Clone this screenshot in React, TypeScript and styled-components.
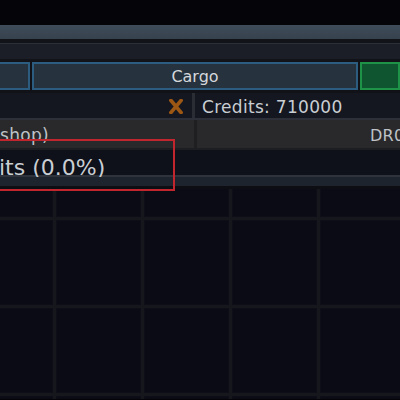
import React from 'react';
import styled, { createGlobalStyle } from 'styled-components';

const GlobalStyle = createGlobalStyle`
    html, body {
        margin: 0;
        padding: 0;
        background: #050509;
        overflow: hidden;
    }
    body {
        font-family: "DejaVu Sans", "Liberation Sans", sans-serif;
        color: #c9ced3;
    }
`;

const Viewport = styled.div`
    width: 400px;
    height: 400px;
    overflow: hidden;
    background: #050509;
`;

// the screen is cropped: the panel runs on past the left edge
const Panel = styled.div`
    width: 520px;
    margin-left: -120px;
    display: flex;
    flex-direction: column;
`;

const TopGap = styled.div`
    height: 25px;
    background: #050509;
`;

const TitleBar = styled.div`
    height: 14px;
    background: linear-gradient(#3f4c59, #36424e);
    border-bottom: 4px solid #111318;
`;

const SubBar = styled.div`
    height: 15px;
    background: #1b1e26;
    border-top: 1px solid #2b2f37;
    border-bottom: 3px solid #111318;
`;

const TabRow = styled.div`
    display: flex;
    gap: 2px;
    height: 28px;
    background: #101217;
    padding-bottom: 3px;
`;

const Tab = styled.div<{ $width: number; $active?: boolean }>`
    flex: 0 0 ${p => p.$width}px;
    box-sizing: border-box;
    display: flex;
    align-items: center;
    justify-content: center;
    font-size: 16px;
    color: #d4d8dc;
    background: ${p => (p.$active ? '#0f5530' : '#26323d')};
    border: 2px solid ${p => (p.$active ? '#1e9348' : '#2c5c80')};
`;

const InfoRow = styled.div<{ $bg: string; $line: string; $h: number }>`
    display: flex;
    height: ${p => p.$h}px;
    background: ${p => p.$bg};
    border-bottom: 2px solid ${p => p.$line};
`;

const Cell = styled.div<{ $width?: number; $sep: string; $pad: number; $color?: string; $size?: number }>`
    flex: ${p => (p.$width ? `0 0 ${p.$width}px` : '1')};
    box-sizing: border-box;
    display: flex;
    align-items: center;
    padding: 2px 0 0 ${p => p.$pad}px;
    font-size: ${p => p.$size || 17}px;
    letter-spacing: 0.3px;
    white-space: nowrap;
    color: ${p => p.$color || '#c9ced3'};
    border-right: ${p => (p.$width ? `3px solid ${p.$sep}` : 'none')};
`;

const CloseMark = styled.svg`
    margin-left: auto;
    margin-right: 9px;
    width: 14px;
    height: 15px;
`;

const ProgressBlock = styled.div`
    position: relative;
    display: flex;
    flex-direction: column;
`;

const ProgressText = styled.div`
    height: 27px;
    box-sizing: border-box;
    display: flex;
    align-items: center;
    padding: 9px 0 0 119px;
    font-size: 22px;
    white-space: nowrap;
    background: #0e111a;
    border-bottom: 2px solid #2e333c;
`;

const ProgressTrack = styled.div`
    height: 9px;
    background: #1e242d;
    border-bottom: 3px solid #0c0e14;
`;

const Highlight = styled.div`
    position: absolute;
    left: 0;
    top: -11px;
    width: 295px;
    height: 52px;
    box-sizing: border-box;
    border: 2px solid #c1262e;
    pointer-events: none;
`;

const GridWindow = styled.div`
    height: 210px;
    overflow: hidden;
    background: #16171d;
`;

const SlotGrid = styled.div`
    display: grid;
    grid-template-columns: repeat(6, 85px);
    grid-auto-rows: 85px;
    gap: 3px;
    margin-top: -57px;
`;

const Slot = styled.div`
    background: #0a0b15;
    box-shadow: inset 0 0 0 1px #0d0e18;
`;

export default function App() {
    return (
        <Viewport>
            <GlobalStyle />
            <Panel>
                <TopGap />
                <TitleBar />
                <SubBar />
                <TabRow>
                    <Tab $width={150} />
                    <Tab $width={326}>Cargo</Tab>
                    <Tab $width={40} $active />
                </TabRow>
                <InfoRow $bg="#141720" $line="#2d3038" $h={25}>
                    <Cell $width={315} $sep="#2a2d33" $pad={10}>
                        <CloseMark viewBox="0 0 14 15">
                            <path d="M2 1.5 L12 13.5 M12 1.5 L2 13.5" stroke="#9b5713" strokeWidth="3.6" strokeLinecap="square" />
                        </CloseMark>
                    </Cell>
                    <Cell $sep="#2a2d33" $pad={7}>Credits: 710000</Cell>
                </InfoRow>
                <InfoRow $bg="#29292b" $line="#1c1e22" $h={28}>
                    <Cell $width={317} $sep="#1f1f22" $pad={120} $color="#bfc3c7">shop)</Cell>
                    <Cell $sep="#1f1f22" $pad={173} $size={16} $color="#bfc3c7">DR0</Cell>
                </InfoRow>
                <ProgressBlock>
                    <ProgressText>its (0.0%)</ProgressText>
                    <ProgressTrack />
                    <Highlight />
                </ProgressBlock>
                <GridWindow>
                    <SlotGrid>
                        {Array.from({ length: 24 }).map((_, i) => (
                            <Slot key={i} />
                        ))}
                    </SlotGrid>
                </GridWindow>
            </Panel>
        </Viewport>
    );
}
